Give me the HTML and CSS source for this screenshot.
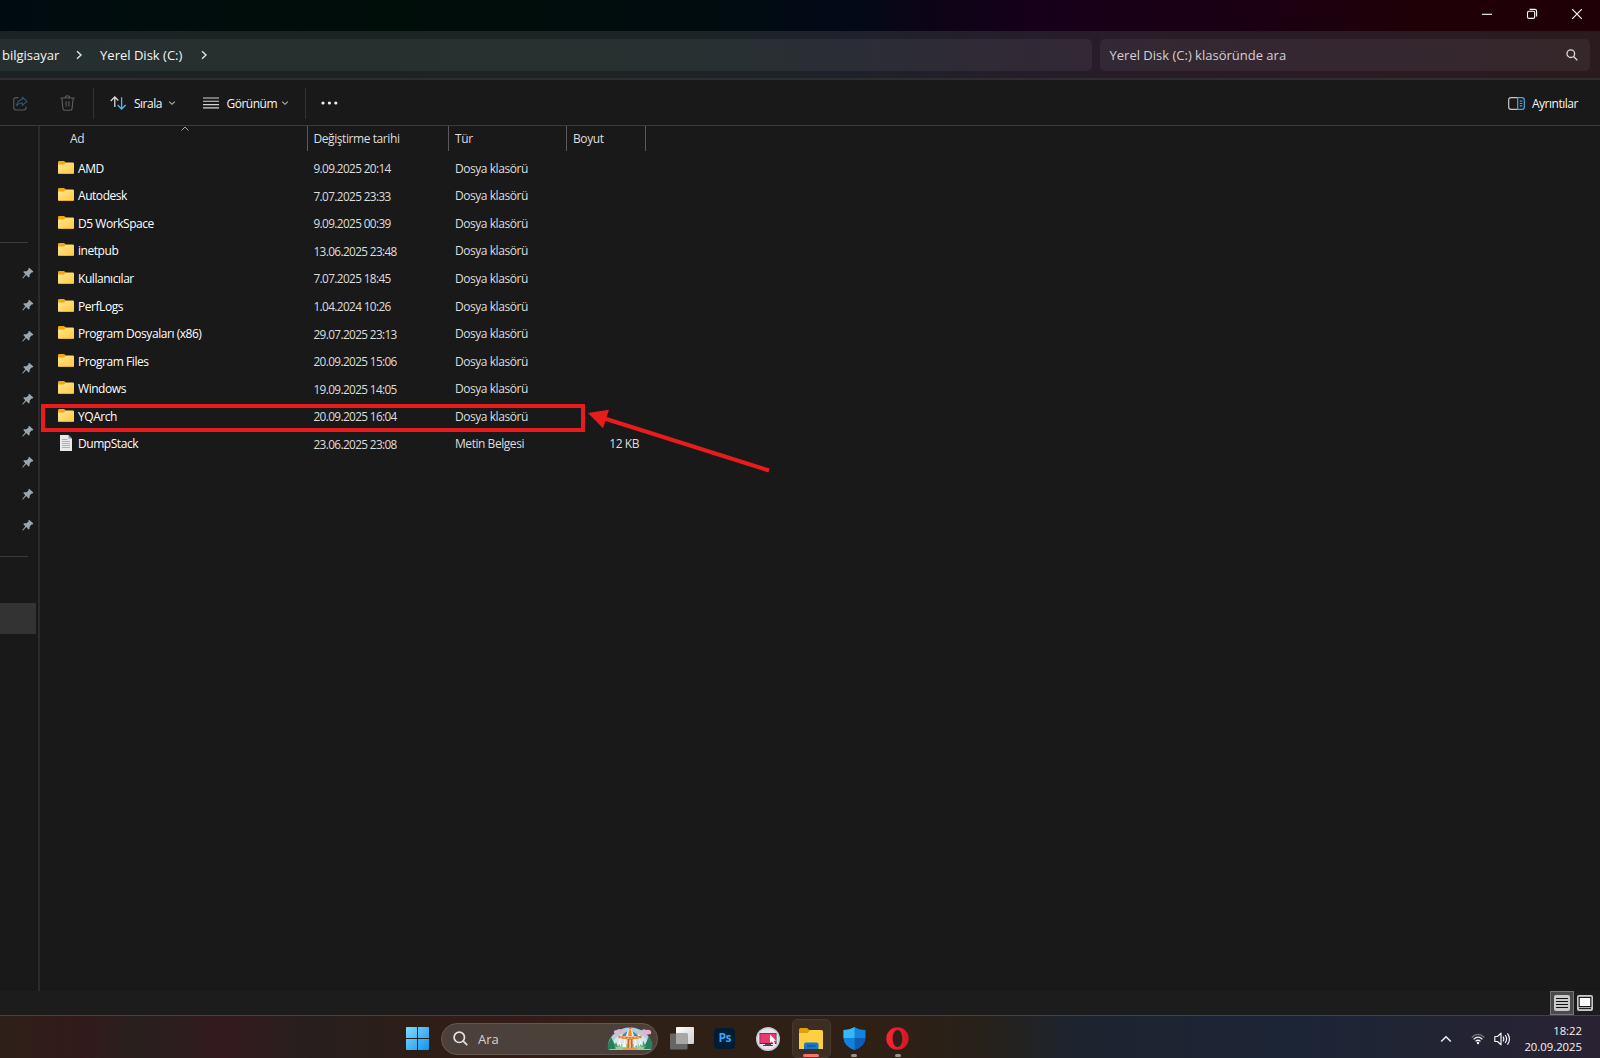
FILE: index.html
```html
<!DOCTYPE html>
<html lang="tr">
  <head>
    <meta charset="UTF-8" />
    <meta name="viewport" content="width=device-width, initial-scale=1.0" />
    <title>Yerel Disk (C:)</title>
    <link rel="stylesheet" href="styles.css">
  </head>
  <body>
    <!-- shared icons -->
    <svg class="defs" width="0" height="0">
      <defs>
        <linearGradient id="gold" x1="0" y1="0" x2="1" y2="1">
          <stop offset="0" stop-color="#ffe596" />
          <stop offset="1" stop-color="#ffcb3e" />
        </linearGradient>
        <linearGradient id="win" x1="0" y1="0" x2="1" y2="1">
          <stop offset="0" stop-color="#7fdcff" />
          <stop offset="1" stop-color="#1294f0" />
        </linearGradient>
        <linearGradient id="gray" x1="0" y1="0" x2="1" y2="1">
          <stop offset="0" stop-color="#ffffff" />
          <stop offset="1" stop-color="#cfcfcf" />
        </linearGradient>
        <linearGradient id="red" x1="0" y1="0" x2="1" y2="0">
          <stop offset="0" stop-color="#ff2436" />
          <stop offset="1" stop-color="#c81a28" />
        </linearGradient>
        <symbol id="folder" viewBox="0 0 16 13">
          <path d="M0 1.2Q0 0 1.2 0H6L8 1.6V6H0Z" fill="#f5a70b" />
          <path d="M0 3.6H6L8 1.6H14.8Q16 1.6 16 2.8V11.8Q16 13 14.8 13H1.2Q0 13 0 11.8Z" fill="url(#gold)" />
          <path d="M.2 12.2Q.5 13 1.2 13H14.8Q15.5 13 15.8 12.2Z" fill="#e3a52d" />
        </symbol>
        <symbol id="pin" viewBox="0 0 12 12">
          <path d="M7.1 .8 11.4 4.6 10.5 5.6 9.6 5.4 7.7 7.6 7.5 9.9 6.6 10.4 4.2 8.1 1 11.4 .4 11.4 .5 10.8 3.3 7.3 1.3 5.1 1.9 4.2 4.5 4.3 6.6 2.5 6.3 1.6Z" fill="#9aa7b0" />
        </symbol>
        <symbol id="chev-down" viewBox="0 0 8 8">
          <path d="M1.2 2.6 4 5.3 6.8 2.6" fill="none" stroke="#b5b5b5" stroke-width="1.1" />
        </symbol>
        <symbol id="chev-right" viewBox="0 0 8 10">
          <path d="M2 1.2 6 5 2 8.8" fill="none" stroke="#e4e4e4" stroke-width="1.4" />
        </symbol>
      </defs>
    </svg>

    <div class="titlebar">
      <svg class="win-btn" width="12" height="12" viewBox="0 0 12 12"><path d="M1 6.3H11" stroke="#fff" stroke-width="1.1" /></svg>
      <svg class="win-btn" width="12" height="12" viewBox="0 0 12 12" fill="none" stroke="#fff" stroke-width="1.1"><rect x="1.5" y="3.2" width="7.2" height="7.2" rx="1.5" /><path d="M3.6 1.4H8.8Q10.6 1.4 10.6 3.2V8.4" /></svg>
      <svg class="win-btn" width="12" height="12" viewBox="0 0 12 12"><path d="M1.2 1.2 10.8 10.8M10.8 1.2 1.2 10.8" stroke="#fff" stroke-width="1.1" /></svg>
    </div>

    <div class="navbar">
      <div class="address">
        <span class="crumb crumb-pc">bilgisayar</span>
        <svg class="crumb-arrow" width="8" height="10"><use href="#chev-right" /></svg>
        <span class="crumb crumb-disk">Yerel Disk (C:)</span>
        <svg class="crumb-arrow" width="8" height="10"><use href="#chev-right" /></svg>
      </div>
      <div class="search">
        <span class="search-text">Yerel Disk (C:) klasöründe ara</span>
        <svg width="12" height="12" viewBox="0 0 12 12" fill="none" stroke="#dedbdd" stroke-width="1.3"><circle cx="4.8" cy="4.7" r="3.8" /><path d="M7.6 7.5 11.3 11.2" /></svg>
      </div>
    </div>

    <div class="toolbar">
      <svg class="share" width="15" height="15" viewBox="0 0 15 15" fill="none" stroke-width="1.1"><path d="M5.5 1.6H3Q.8 1.6 .8 3.8V11.8Q.8 14 3 14H10.8Q13 14 13 11.8V10.5" stroke="#5c5c5c" /><path d="M9.3 1.2 14 5.3 9.3 9.3V7Q5.7 6.8 3.7 9.6 4.3 4 9.3 3.5Z" stroke="#2c5b76" stroke-linejoin="round" /></svg>
      <svg class="trash" width="15" height="16" viewBox="0 0 15 16" fill="none" stroke="#5f5f5f" stroke-width="1.1"><path d="M.5 3H14.5M5.2 3Q5.2 .8 7.5 .8T9.8 3M1.8 3 2.9 13.4Q3.1 15.2 4.8 15.2H10.2Q11.9 15.2 12.1 13.4L13.2 3M6.1 6.2V11.4M8.9 6.2V11.4" /></svg>
      <i class="divider"></i>
      <svg class="sort" width="17" height="14" viewBox="0 0 17 14" fill="none" stroke-width="1.3"><path d="M4.8 11V1M.7 5 4.8 1 8.3 4.5" stroke="#d8d8d8" /><path d="M11.6 1.2V13M7.6 9 11.6 13 15.7 9" stroke="#4cb8ee" /></svg>
      <span class="tool-text sirala">Sırala</span>
      <svg class="drop" width="8" height="8"><use href="#chev-down" /></svg>
      <svg class="lines" width="16" height="12" viewBox="0 0 16 12"><path d="M0 1H16M0 4.3H16M0 7.6H16M0 10.9H16" stroke="#d5d5d5" stroke-width="1.1" /></svg>
      <span class="tool-text gorunum">Görünüm</span>
      <svg class="drop" width="8" height="8"><use href="#chev-down" /></svg>
      <i class="divider second"></i>
      <svg class="dots" width="17" height="4" viewBox="0 0 17 4" fill="#f0f0f0"><circle cx="2" cy="2" r="1.6" /><circle cx="8.4" cy="2" r="1.6" /><circle cx="14.8" cy="2" r="1.6" /></svg>
      <svg class="details-icon" width="17" height="13" viewBox="0 0 17 13" fill="none" stroke-width="1.2"><path d="M9.5 .7H3Q.7 .7 .7 3V10Q.7 12.3 3 12.3H9.5" stroke="#c8c8c8" /><path d="M9.7 .7H14Q16.3 .7 16.3 3V10Q16.3 12.3 14 12.3H9.7ZM11.8 4.2H14.3M11.8 6.5H14.3M11.8 8.8H14.3" stroke="#46a9e0" /></svg>
      <span class="tool-text ayrinti">Ayrıntılar</span>
    </div>

    <div class="main">
      <div class="sidebar">
        <i class="side-line"></i>
        <div class="pins">
          <svg><use href="#pin" /></svg>
          <svg><use href="#pin" /></svg>
          <svg><use href="#pin" /></svg>
          <svg><use href="#pin" /></svg>
          <svg><use href="#pin" /></svg>
          <svg><use href="#pin" /></svg>
          <svg><use href="#pin" /></svg>
          <svg><use href="#pin" /></svg>
          <svg><use href="#pin" /></svg>
        </div>
        <i class="side-line"></i>
        <div class="side-active"></div>
      </div>

      <div class="files">
        <div class="head">
          <span class="h-name">Ad
            <svg class="sort-mark" width="8" height="5" viewBox="0 0 8 5"><path d="M.5 4.5 4 1 7.5 4.5" fill="none" stroke="#a5a5a5" /></svg>
          </span>
          <span class="h-date">Değiştirme tarihi</span>
          <span class="h-type">Tür</span>
          <span class="h-size">Boyut</span>
        </div>

        <div class="row"><span class="name"><svg class="folder"><use href="#folder" /></svg>AMD</span><span class="date">9.09.2025 20:14</span><span>Dosya klasörü</span><span></span></div>
        <div class="row"><span class="name"><svg class="folder"><use href="#folder" /></svg>Autodesk</span><span class="date">7.07.2025 23:33</span><span>Dosya klasörü</span><span></span></div>
        <div class="row"><span class="name"><svg class="folder"><use href="#folder" /></svg>D5 WorkSpace</span><span class="date">9.09.2025 00:39</span><span>Dosya klasörü</span><span></span></div>
        <div class="row"><span class="name"><svg class="folder"><use href="#folder" /></svg>inetpub</span><span class="date">13.06.2025 23:48</span><span>Dosya klasörü</span><span></span></div>
        <div class="row"><span class="name"><svg class="folder"><use href="#folder" /></svg>Kullanıcılar</span><span class="date">7.07.2025 18:45</span><span>Dosya klasörü</span><span></span></div>
        <div class="row"><span class="name"><svg class="folder"><use href="#folder" /></svg>PerfLogs</span><span class="date">1.04.2024 10:26</span><span>Dosya klasörü</span><span></span></div>
        <div class="row"><span class="name"><svg class="folder"><use href="#folder" /></svg>Program Dosyaları (x86)</span><span class="date">29.07.2025 23:13</span><span>Dosya klasörü</span><span></span></div>
        <div class="row"><span class="name"><svg class="folder"><use href="#folder" /></svg>Program Files</span><span class="date">20.09.2025 15:06</span><span>Dosya klasörü</span><span></span></div>
        <div class="row"><span class="name"><svg class="folder"><use href="#folder" /></svg>Windows</span><span class="date">19.09.2025 14:05</span><span>Dosya klasörü</span><span></span></div>
        <div class="row"><span class="name"><svg class="folder"><use href="#folder" /></svg>YQArch</span><span class="date">20.09.2025 16:04</span><span>Dosya klasörü</span><span></span>
          <div class="mark-box"></div>
          <svg class="mark-arrow" width="184" height="68" viewBox="0 0 184 68"><path d="M15 9 181 61.5" stroke="#e81c1c" stroke-width="4" /><path d="M0 4 21 .8 15 19.200Z" fill="#e81c1c" /></svg>
        </div>
        <div class="row"><span class="name"><svg class="doc" viewBox="0 0 12 16"><path d="M0 0H8.5L12 3.5V16H0Z" fill="#e9e9e9" /><path d="M8.5 0V3.5H12Z" fill="#8d8d8d" /><path d="M2 4.5H7.5M2 6.5H10M2 8.5H10M2 10.5H10M2 12.5H10" stroke="#a9a9a9" stroke-width=".9" /></svg>DumpStack</span><span class="date">23.06.2025 23:08</span><span>Metin Belgesi</span><span class="size">12 KB</span></div>
      </div>
    </div>

    <div class="statusbar">
      <div class="view active">
        <svg width="16" height="16" viewBox="0 0 16 16"><rect width="16" height="16" rx="2" fill="#c9c9c9" /><path d="M2 3.5H14M2 6.5H14M2 9.5H14M2 12.5H14" stroke="#111" stroke-width="1.1" /></svg>
      </div>
      <div class="view">
        <svg width="16" height="16" viewBox="0 0 16 16"><rect width="16" height="16" rx="2" fill="#c9c9c9" /><rect x="2.2" y="2.4" width="11.6" height="9.2" fill="#fff" stroke="#111" stroke-width="1.1" /><path d="M2 13.6H14" stroke="#111" /></svg>
      </div>
    </div>

    <div class="taskbar">
      <svg class="start" width="23" height="23" viewBox="0 0 23 23" fill="url(#win)"><path d="M1 0H11V11H0V1Q0 0 1 0ZM12 0H22Q23 0 23 1V11H12ZM0 12H11V23H1Q0 23 0 22ZM12 12H23V22Q23 23 22 23H12Z" /></svg>
      <div class="task-search">
        <svg width="15" height="15" viewBox="0 0 15 15" fill="none" stroke="#e6e3e1" stroke-width="1.7"><circle cx="6.3" cy="6.3" r="5.2" /><path d="M10.2 10.2 14.2 14.2" /></svg>
        <span class="ara">Ara</span>
        <!-- carousel picture -->
        <svg class="carousel" width="46" height="24" viewBox="0 0 46 24">
          <path d="M1 22Q0 12 8 6 14 .5 23 .5T38 6Q46 12 45 22Z" fill="#b5cdd6" />
          <path d="M8 12Q15 5 22 8V17H5Z" fill="#d9e7e6" />
          <path d="M25 9Q34 5 40 13V18H26Z" fill="#d3e6ec" />
          <path d="M7 6Q6 3 10 3 12 1 14 3 17 4 15 6ZM34 4Q36 1 39 3 45 2 44 7L38 8Z" fill="#e3b1d4" />
          <path d="M1 22Q2 17 11 17H36Q44 17 45 22L43 23H3Z" fill="#a3c98d" />
          <path d="M4 10 8 18 8.500 22H.5L1 17ZM42 9 45.500 17 45 22H37L38.500 17Z" fill="#277f5c" />
          <path d="M9 15 11.500 20H7ZM36.500 14 39 20H34Z" fill="#4aa36f" />
          <path d="M12 8.500Q20 6 23 1 26 6 34 8.500V11H12Z" fill="#f3eee2" />
          <path d="M16 7 20.500 4 19 9H15ZM25.500 4 30 7 31 9H27Z" fill="#3a8fc4" />
          <path d="M22 2.500H24L25 9H21Z" fill="#ef8a35" />
          <path d="M11.500 8.500Q23 11 34.500 8.500V11Q23 13.500 11.500 11Z" fill="#e9762a" />
          <path d="M13 10Q23 12.400 33 10" fill="none" stroke="#ffd35c" stroke-dasharray="2 1.500" />
          <path d="M20.500 12H25.500V21H20.500Z" fill="#dd5a31" />
          <path d="M22.300 12.500H23.700V21H22.300Z" fill="#ffdc94" />
          <path d="M13.500 11.500 12 17M18 12 17 18M28 12 29 18M32.500 11.500 34 17" stroke="#fff" stroke-width=".8" />
          <path d="M10.500 16H14V19H10.500ZM15.500 17H19V20H15.500ZM27 17H30.500V20H27ZM32 16H35.500V19H32Z" fill="#f1f8ff" />
          <path d="M11.500 17.500H13V19H11.500ZM28.500 18.500H30V20H28.500ZM33 17.500H34.500V19H33Z" fill="#4aa5dc" />
          <path d="M16 22H30" stroke="#e8964e" stroke-width="1.600" />
          <circle cx="23" cy="1.200" r=".9" fill="#ee5135" />
        </svg>
      </div>

      <div class="app">
        <svg width="24" height="23" viewBox="0 0 24 23"><rect x="6" y="0" width="18" height="17" rx="1" fill="url(#gray)" /><rect x="0" y="6.500" width="17.500" height="16" rx="1" fill="#666" /><path d="M6 6.500H17.500V17H6Z" fill="#a7a7a7" /></svg>
      </div>
      <div class="app"><span class="ps">Ps</span></div>
      <div class="app">
        <svg width="24" height="24" viewBox="0 0 24 24"><circle cx="12" cy="12" r="12" fill="#c9cace" /><circle cx="12" cy="12" r="10.500" fill="#e6e6ea" /><path d="M9 16H15V18H17V19H7V18H9Z" fill="#4a4a4e" /><rect x="3.500" y="6" width="17" height="11" fill="#4a3040" /><rect x="4.200" y="6.600" width="15.600" height="9.400" fill="#e63a70" /><path d="M14 7.500V16L16 14.300 17.500 17.500 19 16.800 17.700 13.700H20Z" fill="#fff" /></svg>
      </div>
      <div class="app open">
        <svg width="24" height="22" viewBox="0 0 24 22"><path d="M0 1.500Q0 0 1.500 0H8L11 2.500V8H0Z" fill="#e3a008" /><path d="M0 5H8.500L11 2H22.500Q24 2 24 3.500V21H0V5Z" fill="#ffce42" /><path d="M5 21V16.500Q5 14.500 7 14.500H17.500Q19.500 14.500 19.500 16.500V21Z" fill="#1478cb" /><path d="M8 18H16.500" stroke="#0c5799" stroke-width="1.300" /></svg>
        <i class="running current"></i>
      </div>
      <div class="app">
        <svg width="23" height="23" viewBox="0 0 23 23"><path d="M11.500 0Q16 3 22.500 3V10Q22.500 19 11.500 23 .5 19 .5 10V3Q7 3 11.500 0Z" fill="#1184dc" /><path d="M11.500 0V11H.5V3Q7 3 11.500 0Z" fill="#35b8f4" /><path d="M11.500 11H22.500Q22 19 11.500 23Z" fill="#0d5cb6" /><path d="M.5 11H11.500V23Q1 19 .5 11Z" fill="#1381db" /></svg>
        <i class="running"></i>
      </div>
      <div class="app">
        <svg width="23" height="23" viewBox="0 0 23 23"><path fill-rule="evenodd" d="M11.500 .3A11.200 11.200 0 1 1 11.500 22.700 11.200 11.200 0 1 1 11.500 .3ZM11.500 3C8.500 3 6.700 6.800 6.700 11.500S8.500 20 11.500 20 16.300 16.200 16.300 11.500 14.500 3 11.500 3Z" fill="url(#red)" /></svg>
        <i class="running"></i>
      </div>

      <div class="tray">
        <svg width="12" height="8" viewBox="0 0 12 8"><path d="M1.200 6.500 6 1.700 10.800 6.500" fill="none" stroke="#f2f2f2" stroke-width="1.500" /></svg>
        <svg class="wifi" width="14" height="12" viewBox="0 0 14 12" fill="none" stroke-width="1.300"><path d="M.7 4.500Q7-1.700 13.300 4.500" stroke="#777582" /><path d="M2.600 6.400Q7 2 11.400 6.400M4.500 8.400Q7 6 9.500 8.400" stroke="#f2f2f2" /><circle cx="7" cy="10" r="1.200" fill="#f2f2f2" stroke="none" /></svg>
        <svg class="sound" width="17" height="14" viewBox="0 0 17 14" fill="none" stroke="#f2f2f2" stroke-width="1.200"><path d="M.8 4.500H3.500L7 1.200V12.800L3.500 9.500H.8Z" stroke-linejoin="round" /><path d="M9 4.700Q10.600 7 9 9.300M11.200 3Q14 7 11.200 11M13.400 1.300Q17.600 7 13.400 12.700" /></svg>
        <div class="clock"><span>18:22</span><span class="day">20.09.2025</span></div>
      </div>
    </div>
  </body>
</html>
```
FILE: styles.css
```css
* {
  margin: 0;
  padding: 0;
  box-sizing: border-box;
}

body {
  width: 1600px;
  height: 1058px;
  overflow: hidden;
  display: flex;
  flex-direction: column;
  background-color: #191919;
  color: #f5f5f5;
  font-family: "Open Sans", "Noto Sans", sans-serif;
  font-size: 12px;
  white-space: nowrap;
}

svg {
  display: block;
  flex-shrink: 0;
}

.defs {
  position: absolute;
}

/* title bar */
.titlebar {
  height: 31px;
  flex-shrink: 0;
  display: flex;
  justify-content: flex-end;
  align-items: center;
  gap: 33px;
  padding: 0 17.500px 3px 0;
  background: linear-gradient(90deg, #000b10 0, #000d0d 120px, #000e0a 400px, #000c0e 700px, #020a18 840px, #0c0416 930px, #16001a 1030px, #1c0012 1280px, #1e0006 1420px, #1f0006 1600px);
}

/* address + search */
.navbar {
  height: 49px;
  flex-shrink: 0;
  display: flex;
  gap: 8px;
  padding: 8px 10px 8px 0;
  border-bottom: 2px solid #2e2e2e;
  background: linear-gradient(90deg, #1a2323 0, #1c2423 400px, #1c2427 700px, #1f212a 860px, #261d29 1050px, #2a1b26 1300px, #2b1b1e 1600px);
}

.address,
.search {
  height: 32px;
  display: flex;
  align-items: center;
  background-color: rgba(255, 255, 255, 0.055);
  font-size: 13px;
}

.address {
  width: 1091.500px;
  padding-left: 2px;
  border-radius: 0 5px 5px 0;
}

.crumb-pc {
  width: 56.500px;
}

.crumb-disk {
  width: 83px;
}

.crumb-arrow {
  margin: 0 16.800px;
}

.search {
  flex: 1;
  justify-content: space-between;
  padding: 0 12.500px 0 10px;
  border-radius: 5px;
  color: #d6d0d3;
}

/* toolbar */
.toolbar {
  height: 46px;
  flex-shrink: 0;
  display: flex;
  align-items: center;
  padding: 1px 21px 0 13px;
  border-bottom: 1px solid #3a3a3a;
}

.trash {
  margin-left: 32px;
}

.divider {
  width: 1px;
  height: 31px;
  margin-left: 18px;
  background-color: #333;
}

.sort {
  margin-left: 16px;
}

.tool-text {
  font-size: 12px;
  font-weight: 500;
  letter-spacing: -0.5px;
}

.sirala {
  width: 29px;
  margin-left: 7px;
}

.gorunum {
  width: 50px;
  margin-left: 8px;
}

.drop {
  margin-left: 4.500px;
}

.lines {
  margin-left: 27px;
}

.divider.second {
  margin-left: 15.500px;
}

.dots {
  margin-left: 15px;
}

.details-icon {
  margin-left: auto;
}

.ayrinti {
  width: 47px;
  margin-left: 7px;
}

/* main */
.main {
  flex: 1;
  display: flex;
}

.sidebar {
  width: 40px;
  padding-top: 116px;
  border-right: 2px solid #2b2b2b;
}

.side-line {
  display: block;
  width: 28px;
  height: 1px;
  background-color: #3a3a3a;
}

.pins {
  display: flex;
  flex-direction: column;
  gap: 19.500px;
  padding: 24px 0 25px 22px;
}

.pins svg {
  width: 12px;
  height: 12px;
}

.side-active {
  width: 36px;
  height: 31px;
  margin-top: 46px;
  background-color: #333;
}

.files {
  flex: 1;
}

.head,
.row {
  display: grid;
  grid-template-columns: 267.5px 141.5px 118px 79px;
}

.head {
  height: 25px;
  margin-bottom: 3.600px;
  color: #dedede;
  letter-spacing: -0.42px;
}

.head span {
  padding-left: 6px;
  border-right: 1px solid #5a5a5a;
  line-height: 25px;
}

.head .h-name {
  position: relative;
  padding-left: 30px;
}

.sort-mark {
  position: absolute;
  top: 0;
  left: 141px;
}

.row {
  position: relative;
  height: 27.54px;
  align-items: center;
  color: #dedede;
  letter-spacing: -0.45px;
}

.row span {
  padding-left: 6px;
}

.row .name {
  display: flex;
  align-items: center;
  padding-left: 18px;
  color: #fff;
}

.row .date {
  font-size: 11.8px;
  letter-spacing: -0.63px;
}

.folder {
  width: 16px;
  height: 13px;
  margin: 0 4px 2px 0;
}

.doc {
  width: 12px;
  height: 16px;
  margin: 0 6px 1px 2px;
}

.row .size {
  padding-right: 7px;
  text-align: right;
}

.mark-box {
  position: absolute;
  top: 2px;
  left: 0.5px;
  width: 544.5px;
  height: 28px;
  border: 4px solid #e81c1c;
}

.mark-arrow {
  position: absolute;
  top: 7px;
  left: 548px;
}

/* status bar */
.statusbar {
  height: 24px;
  flex-shrink: 0;
  display: flex;
  justify-content: flex-end;
  padding-right: 4px;
  background-color: #1c1c1c;
}

.view {
  width: 22px;
  height: 24px;
  display: flex;
  align-items: center;
  justify-content: center;
}

.view.active {
  width: 24px;
  border: 1px solid #777;
  background-color: #4b4b4b;
}

/* taskbar */
.taskbar {
  height: 43px;
  flex-shrink: 0;
  display: flex;
  align-items: center;
  padding: 3px 18px 0 406px;
  border-top: 1px solid #47423e;
  background: linear-gradient(90deg, #2e2018 0, #321a1b 80px, #28201e 140px, #341a1e 225px, #271f1e 310px, #2e1e16 430px, #351b17 520px, #2e2016 620px, #2e2015 900px, #272119 980px, #1d2430 1080px, #1c2536 1300px, #222433 1430px, #292233 1600px);
}

.task-search {
  width: 217px;
  height: 32px;
  display: flex;
  align-items: center;
  margin: 0 2px 0 12px;
  padding: 0 4px 0 11px;
  border: 1px solid #65574e;
  border-radius: 16px;
  background-color: #4c403a;
}

.ara {
  margin-left: 10px;
  color: #d8d2cf;
  font-size: 13px;
}

.carousel {
  margin-left: auto;
}

.app {
  position: relative;
  width: 43.2px;
  height: 39px;
  display: flex;
  align-items: center;
  justify-content: center;
}

.app.open {
  width: 39.2px;
  margin: 0 2px;
  border: 1px solid #463930;
  border-radius: 5px;
  background-color: #3b2e24;
}

.ps {
  width: 21px;
  height: 21px;
  border-radius: 4px;
  background-color: #001d33;
  color: #36a6fa;
  font-size: 12px;
  font-weight: 700;
  line-height: 19px;
  letter-spacing: -0.5px;
  text-align: center;
}

.running {
  position: absolute;
  bottom: 1px;
  width: 6px;
  height: 3px;
  border-radius: 2px;
  background-color: #9b948f;
}

.running.current {
  bottom: 0;
  width: 16px;
  background-color: #f8746b;
}

.tray {
  display: flex;
  align-items: center;
  margin-left: auto;
}

.wifi {
  margin-left: 19px;
}

.sound {
  margin-left: 9px;
}

.clock {
  width: 57px;
  display: flex;
  flex-direction: column;
  align-items: flex-end;
  margin-left: 14px;
  font-size: 11.3px;
  line-height: 15.5px;
}
```
